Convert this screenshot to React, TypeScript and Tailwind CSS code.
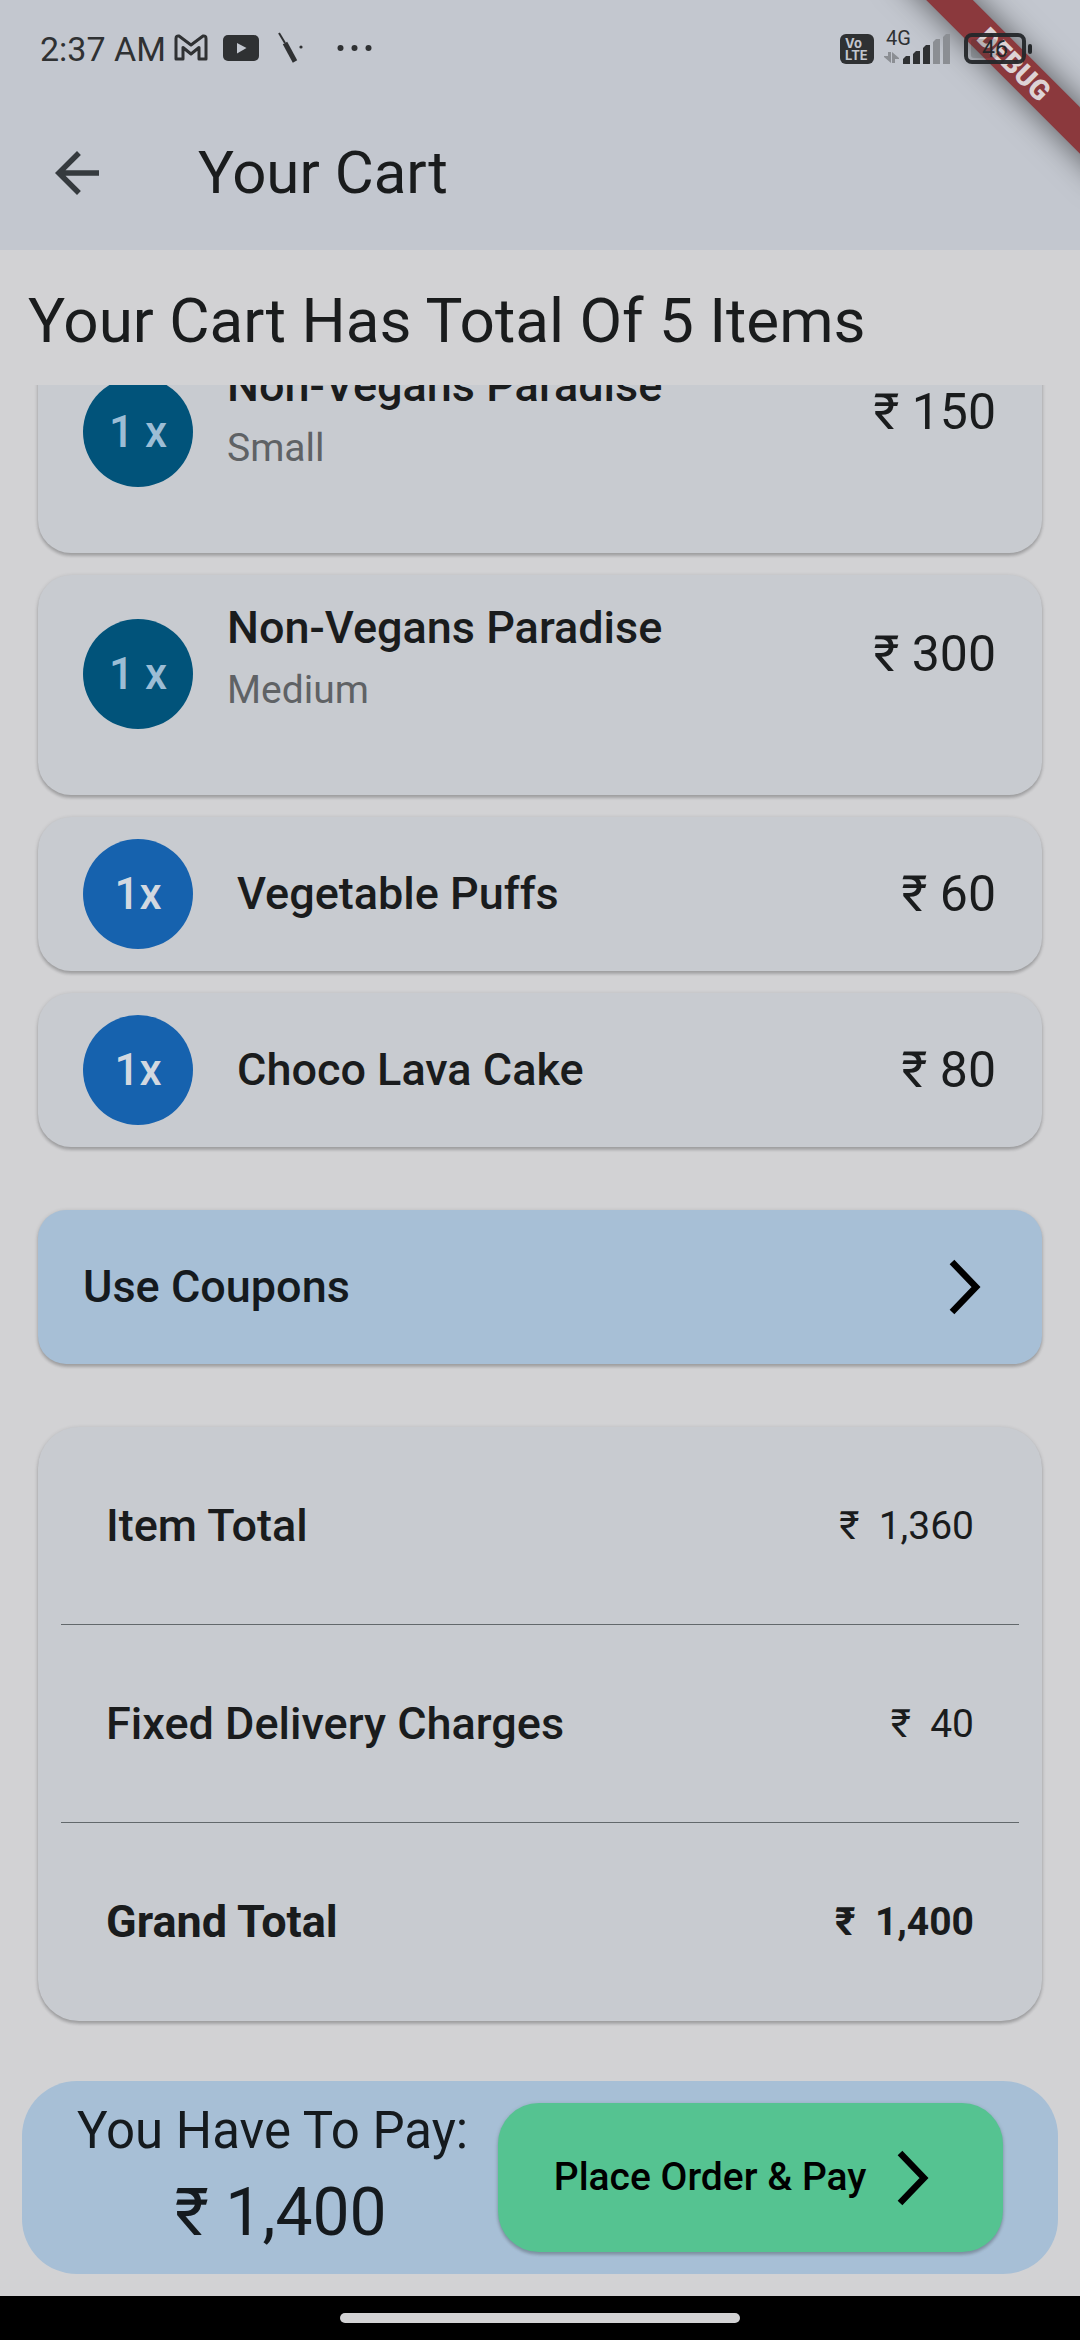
import React from "react";

type Item = { qty: string; name: string; size?: string; price: string };

const items: Item[] = [
  { qty: "1 x", name: "Non-Vegans Paradise", size: "Small", price: "₹ 150" },
  { qty: "1 x", name: "Non-Vegans Paradise", size: "Medium", price: "₹ 300" },
  { qty: "1x", name: "Vegetable Puffs", price: "₹ 60" },
  { qty: "1x", name: "Choco Lava Cake", price: "₹ 80" },
];

const cardShadow =
  "shadow-[0_3px_3px_rgba(0,0,0,0.16),0_1px_4px_rgba(0,0,0,0.16)]";

function Chevron() {
  return (
    <svg viewBox="0 0 66 66" className="size-[66px] shrink-0" aria-hidden="true">
      <path d="M19 8 L43 33 L19 58" fill="none" stroke="#000" strokeWidth="6.5" />
    </svg>
  );
}

function StatusIcons() {
  return (
    <svg viewBox="0 0 200 50" className="h-[50px] w-[200px] shrink-0" aria-hidden="true">
      <path
        d="M2 34V13.500Q2 10.500 5 11L17 20L29 11Q32 10.500 32 13.500V34H25V22.500L17 29L9 22.500V34Z"
        fill="none"
        stroke="#2f3133"
        strokeWidth="3"
        strokeLinejoin="round"
      />
      <rect x="49" y="10" width="36" height="26" rx="5" fill="#2f3133" />
      <path d="M63 18V28.500L72.500 23Z" fill="#c3c7cf" />
      <path d="M105 8L111 18" stroke="#2f3133" strokeWidth="2" />
      <path d="M111 18L121 36.500" stroke="#2f3133" strokeWidth="5" />
      <circle cx="127" cy="22" r="1.600" fill="#2f3133" />
      <circle cx="166.500" cy="23" r="3" fill="#2f3133" />
      <circle cx="180.500" cy="23" r="3" fill="#2f3133" />
      <circle cx="194.500" cy="23" r="3" fill="#2f3133" />
    </svg>
  );
}

function VolteBadge() {
  return (
    <span className="flex h-[30px] w-[34px] flex-col justify-center rounded-[6px] bg-[#2f3133] pl-[5px] font-['Inter',sans-serif] text-[13px] leading-[12px] font-bold text-[#c3c7cf]">
      <span>Vo</span>
      <span>LTE</span>
    </span>
  );
}

function Signal() {
  return (
    <svg viewBox="0 0 68 34" className="h-[34px] w-[68px] overflow-visible" aria-hidden="true">
      <g fill="#8b8e93">
        <path d="M4 20H7V31L0 25V24H4Z" />
        <path d="M11 31H8V20L15 26V27H11Z" />
      </g>
      <text x="2" y="13" fontFamily="Roboto, sans-serif" fontSize="20" fill="#2f3133">
        4G
      </text>
      <path d="M19 27L22 24H26V32H19Z" fill="#2f3133" />
      <path d="M29 22L32 19H36V32H29Z" fill="#2f3133" />
      <path d="M39 16L42 13H46V32H39Z" fill="#2f3133" />
      <path d="M49 10L52 7H56V32H49Z" fill="#8b8e93" />
      <path d="M59 5L62 2H66V32H59Z" fill="#8b8e93" />
    </svg>
  );
}

function Battery() {
  return (
    <svg viewBox="0 0 70 32" className="h-[32px] w-[70px]" aria-hidden="true">
      <rect x="7" y="6" width="26" height="19" rx="3" fill="#2f3133" fillOpacity="0.2" />
      <rect x="2" y="2" width="58" height="27" rx="6" fill="none" stroke="#24272a" strokeOpacity="0.95" strokeWidth="4" />
      <rect x="64" y="11" width="4" height="10" rx="2" fill="#24272a" />
      <text x="18" y="24" fontFamily="Roboto, sans-serif" fontSize="23" fill="#24272a">
        46
      </text>
    </svg>
  );
}

function DebugBanner() {
  return (
    <div className="pointer-events-none absolute top-0 right-0 size-[240px] overflow-hidden">
      <div className="absolute top-[48px] left-[24px] flex h-[33px] w-[300px] rotate-45 items-center justify-center bg-[#8b393d] font-['Roboto',sans-serif] text-[28px] leading-[33px] font-black text-[#ddd3d5] shadow-[0_0_32px_rgba(0,0,0,0.6)]">
        DEBUG
      </div>
    </div>
  );
}

function CartItem({ item }: { item: Item }) {
  const pizza = item.size !== undefined;
  return (
    <li
      className={`flex shrink-0 rounded-[33px] bg-[#c8cbd0] pr-[46px] pl-[45px] ${cardShadow} ${
        pizza ? "h-[220px] items-start pt-[44px]" : "h-[154px] items-center"
      }`}
    >
      <span
        className={`flex size-[110px] shrink-0 items-center justify-center rounded-full text-[44px] font-medium ${
          pizza ? "bg-[#01537a] text-[#9cbdd5]" : "bg-[#1662ae] text-[#d2d8e0]"
        }`}
      >
        {item.qty}
      </span>
      {pizza ? (
        <div className="-mt-[22px] ml-[34px] flex-1">
          <h2 className="text-[45px] leading-[62px] font-medium">{item.name}</h2>
          <p className="text-[39px] leading-[62px] text-[#5f6265]">{item.size}</p>
        </div>
      ) : (
        <h2 className="ml-[44px] flex-1 text-[45px] leading-[62px] font-medium">{item.name}</h2>
      )}
      <span className="text-[50px] leading-[70px]">{item.price}</span>
    </li>
  );
}

function TotalRow({ label, value, bold }: { label: string; value: string; bold?: boolean }) {
  return (
    <div
      className={`flex h-[198px] items-center justify-between px-[45px] not-last:border-b not-last:border-[#62686b] ${
        bold ? "font-bold" : ""
      }`}
    >
      <dt className={`text-[45px] leading-[62px] ${bold ? "" : "font-medium"}`}>{label}</dt>
      <dd className="text-[39px] leading-[62px] whitespace-pre">{value}</dd>
    </div>
  );
}

export default function App() {
  return (
    <div className="relative flex h-screen w-full flex-col overflow-hidden bg-[#d2d2d4] font-['Roboto',sans-serif] text-[#1a1c1d]">
      <header className="shrink-0 bg-[#c3c7cf]">
        <div className="relative z-10 flex h-[98px] items-center pr-[46px] pl-[40px] text-[#2f3133]">
          <span className="text-[34px] leading-[40px]">2:37 AM</span>
          <span className="ml-[8px] pt-[2px]">
            <StatusIcons />
          </span>
          <span className="ml-auto">
            <VolteBadge />
          </span>
          <span className="ml-[10px]">
            <Signal />
          </span>
          <span className="ml-[12px]">
            <Battery />
          </span>
        </div>
        <div className="flex h-[152px] items-center pb-[2px]">
          <button aria-label="Back" className="ml-[44px] size-[66px]">
            <svg viewBox="0 0 24 24" className="size-[66px]" aria-hidden="true">
              <path
                d="M20 11H7.830l5.590-5.590L12 4l-8 8 8 8 1.410-1.410L7.830 13H20v-2z"
                fill="#353a3e"
              />
            </svg>
          </button>
          <h1 className="ml-[88px] text-[60px] leading-[80px]">Your Cart</h1>
        </div>
      </header>

      <p className="shrink-0 px-[28px] pt-[31px] pb-[24px] text-[62px] leading-[80px]">
        Your Cart Has Total Of 5 Items
      </p>

      <main className="flex min-h-0 flex-1 flex-col overflow-hidden px-[38px]">
        <ul className="-mt-[52px] flex flex-col gap-[22px]">
          {items.map((item, i) => (
            <CartItem key={i} item={item} />
          ))}
        </ul>
        <button
          className={`mt-[63px] flex h-[154px] shrink-0 items-center justify-between rounded-[28px] bg-[#a7bfd6] pr-[43px] pl-[45px] text-[45px] leading-[62px] font-medium text-[#151a1e] ${cardShadow}`}
        >
          Use Coupons
          <Chevron />
        </button>
        <dl className={`mt-[63px] shrink-0 rounded-[41px] bg-[#c8cbd0] px-[23px] ${cardShadow}`}>
          <TotalRow label="Item Total" value="₹  1,360" />
          <TotalRow label="Fixed Delivery Charges" value="₹  40" />
          <TotalRow label="Grand Total" value="₹  1,400" bold />
        </dl>
      </main>

      <section className="mx-[22px] mb-[22px] flex h-[193px] shrink-0 items-center rounded-[55px] bg-[#a7bfd6] pr-[55px] pl-[55px] text-[#151a1e]">
        <div className="mr-[30px] flex-1 text-center whitespace-pre">
          <p className="text-[51px] leading-[70px]">You Have To Pay:</p>
          <p className="text-[66px] leading-[94px]">{" ₹ 1,400"}</p>
        </div>
        <button
          className={`flex h-[149px] w-[506px] items-center justify-center rounded-[41px] bg-[#55c391] text-[39px] font-medium text-black ${cardShadow}`}
        >
          Place Order &amp; Pay
          <span className="ml-[15px]">
            <Chevron />
          </span>
        </button>
      </section>

      <footer className="flex h-[44px] shrink-0 items-center justify-center bg-black">
        <div className="h-[10px] w-[400px] rounded-full bg-[#d2d2d4]" />
      </footer>
      <DebugBanner />
    </div>
  );
}
